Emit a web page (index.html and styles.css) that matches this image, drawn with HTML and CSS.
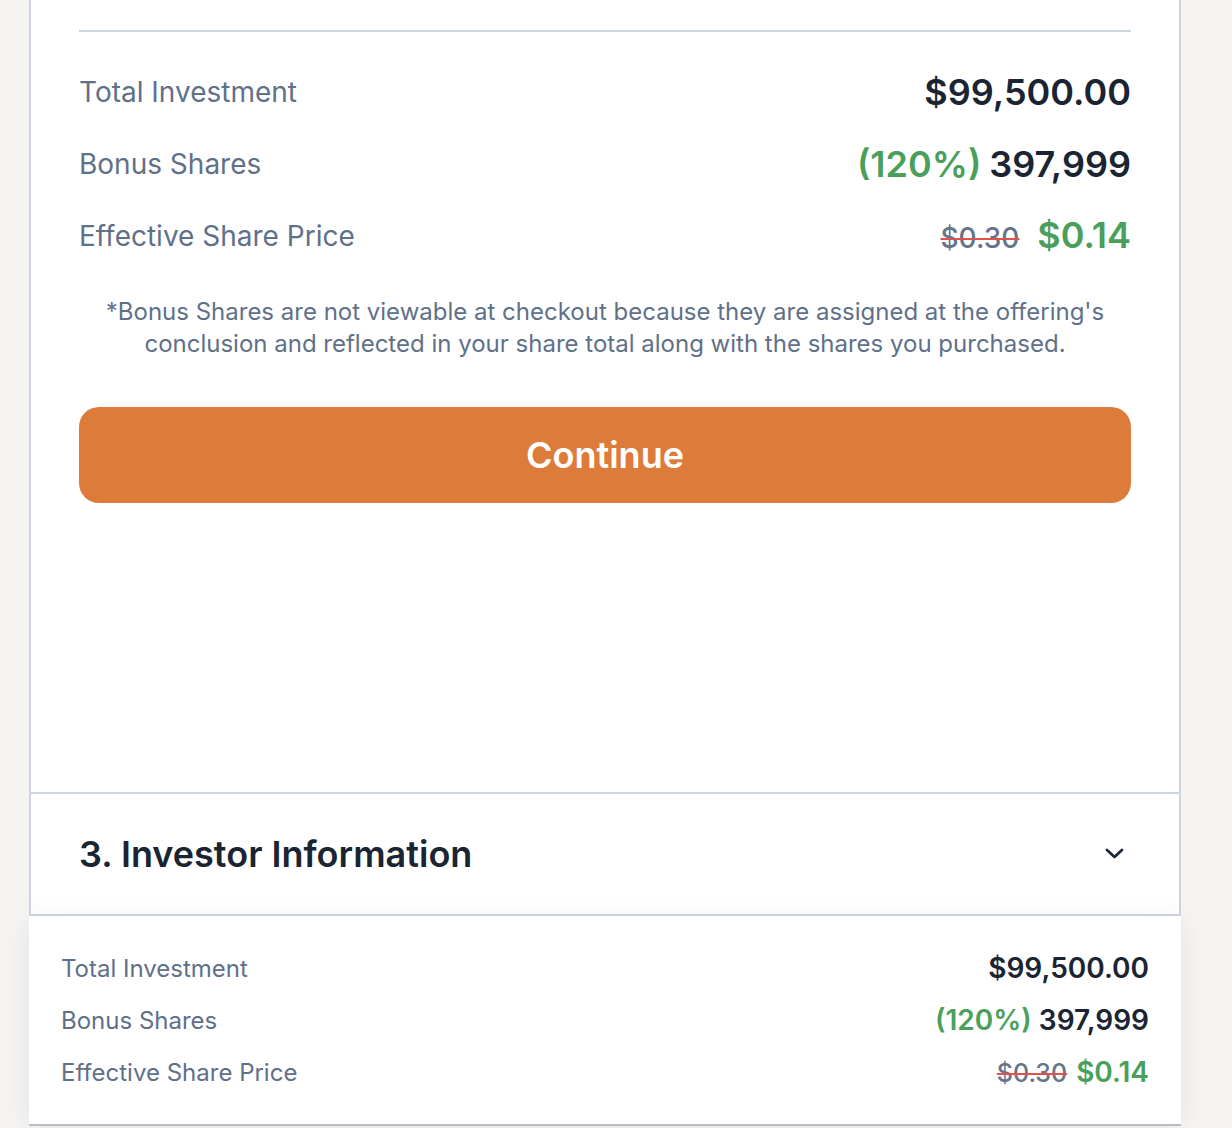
FILE: index.html
```html
<!DOCTYPE html>
<html lang="en">
<head>
<meta charset="utf-8">
<title>Checkout</title>
<link rel="stylesheet" href="styles.css">
</head>
<body>
<div class="card">
  <div class="card-body">
    <div class="rule"></div>
    <div class="rows">
      <div class="row">
        <span class="label">Total Investment</span>
        <span class="value">$99,500.00</span>
      </div>
      <div class="row">
        <span class="label">Bonus Shares</span>
        <span class="value pair"><span class="green">(120%)</span><span>397,999</span></span>
      </div>
      <div class="row">
        <span class="label">Effective Share Price</span>
        <span class="value pair price"><span class="old">$0.30</span><span class="green">$0.14</span></span>
      </div>
    </div>
    <p class="note">*Bonus Shares are not viewable at checkout because they are assigned at the offering's conclusion and reflected in your share total along with the shares you purchased.</p>
    <button class="continue" type="button">Continue</button>
  </div>
  <div class="section-head">
    <h2 class="section-title">3. Investor Information</h2>
    <svg class="chevron" width="24" height="24" viewBox="0 0 24 24" aria-hidden="true"><path d="M4 8 L11.5 15 L19 8" fill="none" stroke="#1e293b" stroke-width="2.8" stroke-linecap="round" stroke-linejoin="round"/></svg>
  </div>
</div>
<div class="sticky-summary">
  <div class="srow">
    <span class="slabel">Total Investment</span>
    <span class="svalue">$99,500.00</span>
  </div>
  <div class="srow">
    <span class="slabel">Bonus Shares</span>
    <span class="svalue pair-s"><span class="green">(120%)</span><span>397,999</span></span>
  </div>
  <div class="srow">
    <span class="slabel">Effective Share Price</span>
    <span class="svalue pair-s price-s"><span class="old-s">$0.30</span><span class="green">$0.14</span></span>
  </div>
</div>
</body>
</html>
```

FILE: styles.css
```css
* { box-sizing: border-box; }

html, body {
  margin: 0;
  padding: 0;
}

body {
  background: #f5f4f2;
  font-family: "Inter", "Noto Sans", "Liberation Sans", sans-serif;
  color: #1e293b;
  width: 1232px;
  height: 1128px;
  overflow: hidden;
}

.card {
  margin-left: 29px;
  width: 1152px;
  background: #ffffff;
  border-left: 2px solid #cfd5e0;
  border-right: 2px solid #cfd5e0;
}

.card-body {
  padding: 30px 48px 289px;
}

.rule {
  height: 2px;
  background: #cfd5e0;
}

.rows {
  margin-top: 24px;
}

.row {
  height: 72px;
  display: flex;
  align-items: center;
  justify-content: space-between;
}

.label {
  font-size: 28px;
  color: #5f7089;
  line-height: 32px;
}

.value {
  font-size: 36px;
  font-weight: 600;
  color: #1a2433;
  line-height: 40px;
}

.pair {
  display: flex;
  align-items: baseline;
  gap: 8px;
}

.price {
  gap: 18px;
}

.green {
  color: #4a9f5a;
}

.old {
  font-size: 28px;
  font-weight: 500;
  color: #64748b;
  text-decoration: line-through;
  text-decoration-color: #e0514d;
  text-decoration-thickness: 2px;
}

.note {
  margin: 24px 0 0;
  text-align: center;
  font-size: 24px;
  line-height: 32px;
  color: #5f7089;
}

.continue {
  display: block;
  width: 100%;
  height: 96px;
  margin-top: 47px;
  border: none;
  border-radius: 20px;
  background: #dd7c3a;
  color: #ffffff;
  font-family: inherit;
  font-size: 36px;
  font-weight: 600;
  cursor: pointer;
}

.section-head {
  border-top: 2px solid #cfd5e0;
  border-bottom: 2px solid #cfd5e0;
  height: 124px;
  display: flex;
  align-items: center;
  justify-content: space-between;
  padding: 0 52px 0 48px;
}

.section-title {
  margin: 0;
  font-size: 36px;
  font-weight: 600;
  color: #1a2433;
}

.chevron {
  display: block;
}

.sticky-summary {
  margin-left: 29px;
  width: 1152px;
  height: 208px;
  background: #ffffff;
  padding: 26px 32px;
  box-shadow: 0 2px 0 rgba(140, 150, 170, 0.55), 0 4px 28px rgba(0, 0, 0, 0.07);
}

.srow {
  height: 52px;
  display: flex;
  align-items: center;
  justify-content: space-between;
}

.slabel {
  font-size: 24px;
  color: #5f7089;
}

.svalue {
  font-size: 28px;
  font-weight: 600;
  color: #1a2433;
}

.pair-s {
  display: flex;
  align-items: baseline;
  gap: 7px;
}

.price-s {
  gap: 9px;
}

.old-s {
  font-size: 25px;
  font-weight: 500;
  color: #64748b;
  text-decoration: line-through;
  text-decoration-color: #e0514d;
  text-decoration-thickness: 2px;
}
```
